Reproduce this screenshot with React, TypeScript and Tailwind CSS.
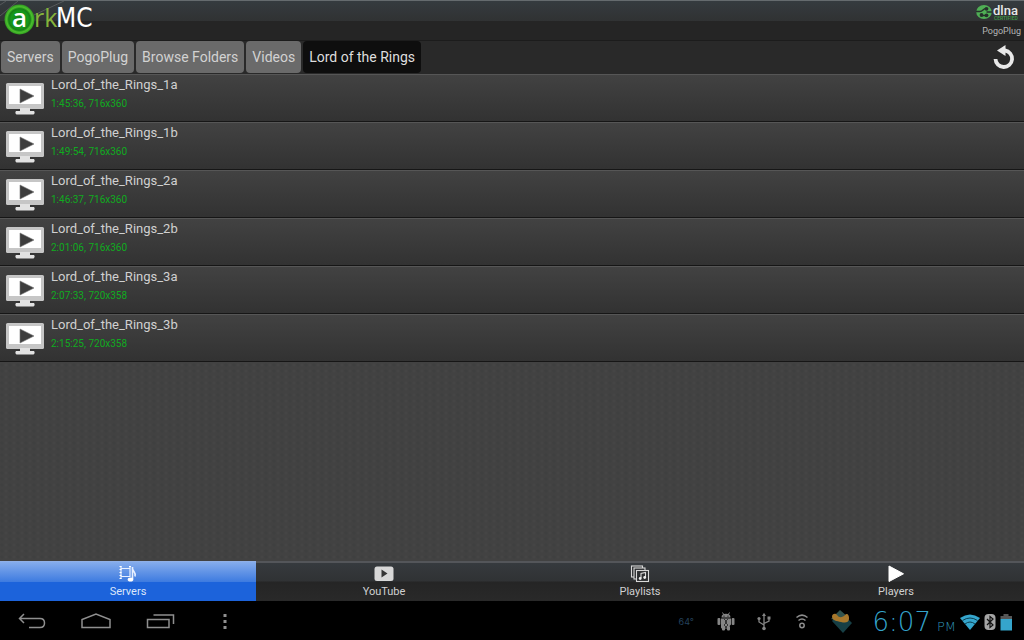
import type { ReactNode } from "react";

const crumbs = ["Servers", "PogoPlug", "Browse Folders", "Videos"];

const videos = [
  { name: "Lord_of_the_Rings_1a", info: "1:45:36, 716x360" },
  { name: "Lord_of_the_Rings_1b", info: "1:49:54, 716x360" },
  { name: "Lord_of_the_Rings_2a", info: "1:46:37, 716x360" },
  { name: "Lord_of_the_Rings_2b", info: "2:01:06, 716x360" },
  { name: "Lord_of_the_Rings_3a", info: "2:07:33, 720x358" },
  { name: "Lord_of_the_Rings_3b", info: "2:15:25, 720x358" },
];

function Logo() {
  return (
    <svg width="110" height="39" viewBox="0 0 110 39" role="img" aria-label="arkMC">
      <defs>
        <radialGradient id="ball" cx="50%" cy="50%" r="50%">
          <stop offset="0" stopColor="#0f7a16" />
          <stop offset="0.55" stopColor="#159a1c" />
          <stop offset="0.72" stopColor="#168016" />
          <stop offset="0.85" stopColor="#4cc02e" />
          <stop offset="1" stopColor="#2f9a20" />
        </radialGradient>
      </defs>
      <path d="M0 15 L18 0 M34 14 L64 0 M0 4 L6 0" stroke="#56595b" strokeWidth="1" fill="none" />
      <circle cx="19.5" cy="18.5" r="15" fill="url(#ball)" />
      <text x="12" y="26" fontFamily="Open Sans, sans-serif" fontSize="26" fontWeight="600" fill="#fff">a</text>
      <text x="34" y="26" fontFamily="Open Sans, sans-serif" fontSize="25" fill="#84b33c">rk</text>
      <text x="56" y="26" fontFamily="DejaVu Sans Condensed, DejaVu Sans, sans-serif" fontSize="26" fill="#fff">MC</text>
    </svg>
  );
}

function DlnaLogo() {
  return (
    <svg width="46" height="18" viewBox="0 0 46 18" role="img" aria-label="dlna certified">
      <ellipse cx="9" cy="9" rx="7.8" ry="7" fill="#4fae55" />
      <g stroke="#26302b" strokeWidth="1.4" fill="none">
        <path d="M1 8.500H5C8 8.500 8 5.500 11 5.500" />
        <path d="M7 12.500H11M11.500 9H17" />
      </g>
      <g fill="#26302b">
        <circle cx="6.500" cy="12" r="1.900" />
        <circle cx="11.500" cy="5.800" r="1.900" />
        <circle cx="11.500" cy="12.300" r="1.900" />
      </g>
      <text x="18" y="12" fontFamily="Roboto, sans-serif" fontSize="13" fontWeight="500" fill="#e8e8e8">dlna</text>
      <text x="19" y="17" fontFamily="Roboto, sans-serif" fontSize="5" fontWeight="500" fill="#3f9b45">CERTIFIED</text>
    </svg>
  );
}

function MonitorIcon() {
  return (
    <svg width="40" height="36" viewBox="0 0 40 36" aria-hidden="true" className="shrink-0">
      <rect x="1" y="3" width="38" height="26" rx="1.500" fill="#c6c6c6" />
      <rect x="4" y="6" width="32" height="18" fill="#fff" />
      <path d="M15 28h10v3h4q1.500 2-.5 3.500h-17q-2-1.500-.5-3.500h4z" fill="#e2e2e2" />
      <path d="M15 9L29 16 15 23z" fill="#3d3d3d" stroke="#777" strokeWidth=".6" />
    </svg>
  );
}

function Refresh() {
  return (
    <svg width="24" height="26" viewBox="0 0 24 26" aria-hidden="true">
      <path d="M11.500 5.500H13A8.300 8.300 0 1 1 3.500 14" fill="none" stroke="#e9e9e9" strokeWidth="3.800" />
      <path d="M13.500 0V11L5 5.500z" fill="#e9e9e9" />
    </svg>
  );
}

function ServersIcon() {
  return (
    <svg width="20" height="18" viewBox="0 0 20 18" aria-hidden="true">
      <g fill="none" stroke="#e8f0ff" strokeWidth="1.200">
        <path d="M3 1V14M12 1V12M3 3.500H12M3 11.500H12" />
        <path d="M14.500 2V14M14.500 3.500C15 7 18.500 7.500 17 11.500" strokeWidth="1.600" />
      </g>
      <path d="M1.500 1.500h2M1.500 4.500h2M1.500 7.500h2M1.500 10.500h2M1.500 13.500h2M11 1.500h2" stroke="#fff" strokeWidth="1" />
      <ellipse cx="12.500" cy="14.500" rx="2.800" ry="2" fill="#fff" />
    </svg>
  );
}

function YouTubeIcon() {
  return (
    <svg width="20" height="18" viewBox="0 0 20 18" aria-hidden="true">
      <rect x=".5" y="1.500" width="19" height="14.500" rx="2.500" fill="#d8d8d8" />
      <path d="M7.500 4.500V12.500L13.500 8.500z" fill="#363636" />
    </svg>
  );
}

function PlaylistIcon() {
  return (
    <svg width="20" height="18" viewBox="0 0 20 18" aria-hidden="true">
      <g fill="#2d2f31" stroke="#d8d8d8" strokeWidth="1.100">
        <rect x="1.500" y="1" width="11" height="11" />
        <rect x="4" y="3" width="11" height="11" />
        <rect x="6.500" y="5.500" width="12" height="11" />
        <path d="M11 13V8.500L15.500 7.500V12" fill="none" />
      </g>
      <circle cx="10.200" cy="13.500" r="1.400" fill="#eee" />
      <circle cx="14.700" cy="12.500" r="1.400" fill="#eee" />
    </svg>
  );
}

function PlayerIcon() {
  return (
    <svg width="20" height="18" viewBox="0 0 20 18" aria-hidden="true">
      <path d="M3 1V16.500L17.500 8.800z" fill="#fff" stroke="#fff" strokeWidth="1" strokeLinejoin="round" />
    </svg>
  );
}

const tabs: { label: string; icon: ReactNode }[] = [
  { label: "Servers", icon: <ServersIcon /> },
  { label: "YouTube", icon: <YouTubeIcon /> },
  { label: "Playlists", icon: <PlaylistIcon /> },
  { label: "Players", icon: <PlayerIcon /> },
];

function SystemBar() {
  return (
    <footer className="flex h-[39px] items-center justify-between bg-black pt-0.5 text-[#35a5cc]">
      <div className="flex items-center pl-4 text-[#8f8f8f]">
        <button aria-label="Back" className="w-16">
          <svg width="32" height="20" viewBox="0 0 32 20" fill="none" stroke="currentColor" strokeWidth="1.500">
            <path d="M8 2L3.500 6.500 8 11M3.500 6.500H24Q28.500 6.500 28.500 11T24 15.500H13" />
          </svg>
        </button>
        <button aria-label="Home" className="w-16">
          <svg width="32" height="20" viewBox="0 0 32 20" fill="none" stroke="currentColor" strokeWidth="1.500">
            <path d="M2 15.500V7.500L16 2 30 7.500V15.500z" />
          </svg>
        </button>
        <button aria-label="Recent apps" className="w-16">
          <svg width="32" height="20" viewBox="0 0 32 20" fill="none" stroke="currentColor" strokeWidth="1.500">
            <path d="M3.500 7.500H25V15.500H3.500zM9.500 3H29.500V12" />
          </svg>
        </button>
        <button aria-label="Menu" className="w-10">
          <svg width="32" height="20" viewBox="0 0 32 20" fill="currentColor">
            <path d="M15.500 2h3v3h-3zM15.500 8h3v3h-3zM15.500 14h3v3h-3z" />
          </svg>
        </button>
      </div>
      <div className="flex items-center pr-3">
        <span className="w-[38px] font-[Inter,sans-serif] text-[9px] text-[#24425c]">64°</span>
        <svg className="mr-5" width="18" height="20" viewBox="0 0 18 20" fill="#858585" aria-hidden="true">
          <path d="M4.500 5.500C4.500 3 6 1.800 9 1.800s4.500 1.200 4.500 3.700zM4 6.500h10v6l-4 4H5q-1 0-1-1z" />
          <path d="M5.500 .5L7 3M12.500 .5L11 3" stroke="#858585" />
          <rect x="0.500" y="6" width="2.800" height="7" rx="1" />
          <rect x="14.700" y="6" width="2.800" height="7" rx="1" />
          <rect x="5" y="14" width="3" height="4.500" rx="1" />
          <rect x="10" y="14" width="3" height="4.500" rx="1" />
          <path d="M7 7l3 3-3 3 3 3M11 7l-3 3 3 3-3 3" stroke="#222" strokeWidth=".8" fill="none" />
          <path d="M6.500 4.200h1M10.500 4.200h1" stroke="#111" />
        </svg>
        <svg className="mr-5" width="18" height="20" viewBox="0 0 18 20" fill="none" stroke="#858585" strokeWidth="1.300" aria-hidden="true">
          <path d="M9 3V16M9 13L4 10V7M9 11.500L14 9V6" />
          <path d="M7 4L9 .8 11 4z" fill="#858585" stroke="none" />
          <circle cx="9" cy="16.500" r="1.800" fill="#858585" stroke="none" />
          <circle cx="4" cy="6.500" r="1.600" fill="#858585" stroke="none" />
          <path d="M12.500 4.500h3v3h-3z" fill="#858585" stroke="none" />
        </svg>
        <svg className="mr-5" width="18" height="20" viewBox="0 0 18 20" fill="none" stroke="#8d8d8d" strokeWidth="1.500" aria-hidden="true">
          <circle cx="9" cy="13.500" r="2.200" />
          <path d="M5.500 8.500Q9 5.500 12.500 8.500M3.500 5.500Q9 .8 14.500 5.500" />
        </svg>
        <svg className="mr-5" width="22" height="24" viewBox="0 0 22 24" aria-hidden="true">
          <path d="M9 1L21 13 12 23 1 11z" fill="#173f45" />
          <path d="M9 0L17 7 8 11 0 9z" fill="#32544e" />
          <path d="M1 6C2 3 5 3 6.500 5.500S12 7.500 14 5 18.500 5 18 9 14 13 10 12 1 11 1 6z" fill="#a8782c" />
        </svg>
        <time className="flex items-baseline gap-1.5 font-['DejaVu_Sans_Light','DejaVu_Sans',sans-serif] font-extralight">
          <span className="text-[26px] leading-8">6:07</span>
          <span className="text-[13px] text-[#2f90b3]">PM</span>
        </time>
        <svg className="ml-1" width="20" height="18" viewBox="0 0 20 18" aria-hidden="true">
          <path d="M0 5Q10-2 20 5L10 17z" fill="#35a5cc" />
          <path d="M2.500 7.500Q10 2.500 17.500 7.500M5 11Q10 7 15 11" fill="none" stroke="#0b3d4f" strokeWidth="1" />
        </svg>
        <svg className="ml-1" width="12" height="18" viewBox="0 0 12 18" aria-hidden="true">
          <rect x=".5" y="1" width="11" height="16" rx="4" fill="#a5a5a5" />
          <path d="M3 6L9 12 6 14.500V3.500L9 6 3 12" fill="none" stroke="#111" strokeWidth="1.200" />
        </svg>
        <svg className="ml-1" width="12" height="18" viewBox="0 0 12 18" aria-hidden="true">
          <path d="M3.500 1h5v2H12v3H.5V3h3z" fill="#565656" />
          <rect x=".5" y="6" width="11.500" height="11.500" fill="#35a5cc" />
        </svg>
      </div>
    </footer>
  );
}

export default function App() {
  return (
    <div className="flex min-h-screen flex-col bg-[#424242] font-[Roboto,sans-serif] text-[#cfcfcf]">
      <header className="flex h-10 items-start justify-between border-t border-[#656b6e] bg-[linear-gradient(#353b3f_0,#303233_20px,#252525_20px,#252525_100%)]">
        <Logo />
        <div className="flex flex-col items-end gap-1 pt-0.5 pr-[3px]">
          <DlnaLogo />
          <span className="text-[9px] leading-3 text-[#b5b5b5]">PogoPlug</span>
        </div>
      </header>
      <nav aria-label="Path" className="flex h-[34px] items-start justify-between border-t border-[#1c1c1c] bg-[#292929] pr-2 pl-px">
        <div className="flex gap-0.5 text-[14px] leading-8">
          {crumbs.map((c) => (
            <button key={c} className="h-8 rounded-sm bg-[#6a6a6a] px-1.5 text-[#d2d2d2]">
              {c}
            </button>
          ))}
          <button aria-current="page" className="h-8 rounded-sm bg-[#0e0e0e] px-1.5 text-[#dedede]">
            Lord of the Rings
          </button>
        </div>
        <button aria-label="Refresh" className="pt-1">
          <Refresh />
        </button>
      </nav>
      <main className="flex-1 bg-[#424242] bg-[radial-gradient(circle_at_2px_3px,#3f4040_1px,transparent_2px),radial-gradient(circle_at_6px_3px,#454545_1px,transparent_2px)] bg-[length:8px_6px]">
        <ul>
          {videos.map((v) => (
            <li
              key={v.name}
              className="flex h-12 items-start gap-1.5 border-t border-b border-t-[#565656] border-b-[#161616] bg-linear-to-b from-[#424242] to-[#323232] pl-[5px]"
            >
              <div className="pt-[5px]">
                <MonitorIcon />
              </div>
              <div className="pt-0.5">
                <div className="text-[13px] leading-4 text-[#d0d0d0]">{v.name}</div>
                <div className="pt-[5px] text-[10px] leading-3 text-[#10ab20]">{v.info}</div>
              </div>
            </li>
          ))}
        </ul>
      </main>
      <nav aria-label="Sections" className="grid h-10 grid-cols-4">
        {tabs.map((t, i) => (
          <button
            key={t.label}
            aria-current={i === 0 ? "page" : undefined}
            className={
              i === 0
                ? "flex flex-col items-center border-t border-[#8fb0e8] bg-[linear-gradient(#86adec_0,#3d7be0_20px,#1c63db_20px,#1c63db_100%)] pt-[3px] text-[#dbe6fa]"
                : "flex flex-col items-center border-t-2 border-[#54565a] bg-[linear-gradient(#363a3e_0,#303234_18px,#252525_19px,#292929_100%)] pt-0.5 text-[#d0d0d0]"
            }
          >
            {t.icon}
            <span className="text-[11px] leading-[18px]">{t.label}</span>
          </button>
        ))}
      </nav>
      <SystemBar />
    </div>
  );
}
